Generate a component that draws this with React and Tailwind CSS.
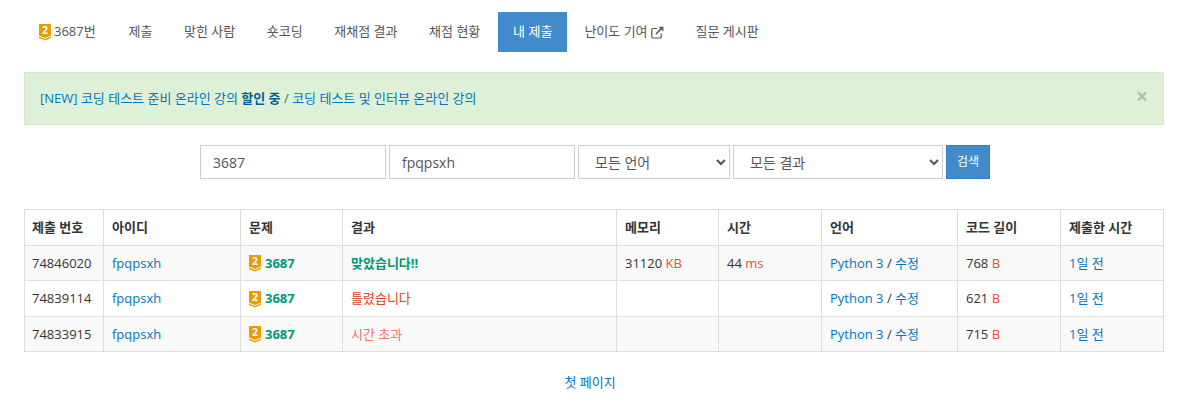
import React from 'react';

const tabs = ['제출', '맞힌 사람', '숏코딩', '재채점 결과', '채점 현황'];

const rows = [
  { id: '74846020', result: '맞았습니다!!', resultClass: 'font-bold text-[#009874]', memory: '31120', time: '44', len: '768', rowClass: 'h-[35px] bg-[#f9f9f9]' },
  { id: '74839114', result: '틀렸습니다', resultClass: 'text-[#dd4124]', memory: '', time: '', len: '621', rowClass: 'h-[36px] bg-white' },
  { id: '74833915', result: '시간 초과', resultClass: 'text-[#fa7268]', memory: '', time: '', len: '715', rowClass: 'h-[35px] bg-[#f9f9f9]' },
];

const headers = ['제출 번호', '아이디', '문제', '결과', '메모리', '시간', '언어', '코드 길이', '제출한 시간'];
const widths = ['w-[79px]', 'w-[137px]', 'w-[102px]', 'w-[274px]', 'w-[102px]', 'w-[103px]', 'w-[136px]', 'w-[103px]', 'w-[103px]'];

function Tier() {
  return (
    <svg width="12" height="17" viewBox="0 0 12 17" className="shrink-0">
      <path d="M0 0H12V11.5L6 14L0 11.5Z" fill="#ec9a00" />
      <path d="M0 12.6L6 15.1L12 12.6V14L6 16.5L0 14Z" fill="#ec9a00" />
      <text x="6" y="10" textAnchor="middle" fontSize="10.5" fontWeight="700" fill="#fff" fontFamily="'Open Sans', sans-serif">2</text>
    </svg>
  );
}

function ExternalLink() {
  return (
    <svg width="13" height="13" viewBox="0 0 13 13" fill="none" stroke="#555" className="ml-[3px]">
      <path d="M6 2.5H2A1.2 1.2 0 0 0 .8 3.7V10.8A1.2 1.2 0 0 0 2 12H9A1.2 1.2 0 0 0 10.2 10.8V7.5" strokeWidth="1.2" />
      <path d="M5 8L11 2" strokeWidth="1.6" />
      <path d="M7.5 .8H12.4V5.7Z" fill="#555" stroke="none" />
    </svg>
  );
}

const cell = 'border border-[#ddd] px-[8px] align-middle text-left';

export default function App() {
  return (
    <div className="w-[1186px] bg-white text-[13px] text-[#333] font-['Open_Sans','Noto_Sans_CJK_KR',sans-serif]">
      <div className="pl-[24px] pr-[22px] pt-[12px]">

        {/* 탭 */}
        <ul className="flex h-[40px] text-[#555]">
          <li className="flex items-center pl-[15px] pr-[17px]">
            <Tier />
            <span className="ml-[3px]">3687번</span>
          </li>
          {tabs.map(tab => (
            <li key={tab} className="flex items-center px-[15.8px]">{tab}</li>
          ))}
          <li className="flex items-center ml-[2px] px-[15px] bg-[#428bca] text-white">내 제출</li>
          <li className="flex items-center px-[17px]">
            난이도 기여
            <ExternalLink />
          </li>
          <li className="flex items-center px-[15px]">질문 게시판</li>
        </ul>

        {/* 알림 */}
        <div className="relative mt-[20px] h-[53px] flex items-center pl-[15px] bg-[#dff0d8] border border-[#d6e9c6] text-[#0076c0]">
          <span>
            [NEW] 코딩 테스트 준비 온라인 강의 <b className="text-[#005d98]">할인 중</b> <span className="text-[#3c763d]">/</span> 코딩 테스트 및 인터뷰 온라인 강의
          </span>
          <span className="absolute right-[15px] top-[13px] text-[21px] leading-[21px] font-bold text-black opacity-20">×</span>
        </div>

        {/* 검색 */}
        <div className="mt-[20px] pl-[2px] flex justify-center gap-[3px] text-[14px] text-[#555]">
          <input readOnly value="3687" className="w-[186px] h-[34px] px-[12px] border border-[#ccc] outline-none" />
          <input readOnly value="fpqpsxh" className="w-[186px] h-[34px] px-[12px] border border-[#ccc] outline-none" />
          <select className="w-[152px] h-[34px] px-[12px] border border-[#ccc] bg-white outline-none">
            <option>모든 언어</option>
          </select>
          <select className="w-[210px] h-[34px] px-[12px] border border-[#ccc] bg-white outline-none">
            <option>모든 결과</option>
          </select>
          <button className="w-[44px] h-[34px] bg-[#428bca] border border-[#357ebd] text-white text-[12px]">검색</button>
        </div>

        {/* 채점 목록 */}
        <table className="mt-[30px] w-[1139px] table-fixed border-collapse">
          <colgroup>
            {widths.map((w, i) => <col key={i} className={w} />)}
          </colgroup>
          <thead>
            <tr className="h-[36px]">
              {headers.map((h, i) => <th key={h} className={`${cell} font-bold ${i === 0 ? 'pl-[7px]' : ''}`}>{h}</th>)}
            </tr>
          </thead>
          <tbody>
            {rows.map(row => (
              <tr key={row.id} className={row.rowClass}>
                <td className={`${cell} pl-[7px] pt-[1px]`}>{row.id}</td>
                <td className={`${cell} pt-[1px] text-[#0076c0]`}>fpqpsxh</td>
                <td className={`${cell} pt-[1px]`}>
                  <div className="flex items-center gap-[4px] font-bold text-[#009874]">
                    <Tier />
                    3687
                  </div>
                </td>
                <td className={`${cell} pt-[1px] ${row.resultClass}`}>{row.result}</td>
                <td className={`${cell} pt-[1px]`}>
                  {row.memory && <>{row.memory} <span className="text-[#e74c3c]">KB</span></>}
                </td>
                <td className={`${cell} pt-[1px]`}>
                  {row.time && <>{row.time} <span className="text-[#e74c3c]">ms</span></>}
                </td>
                <td className={`${cell} pt-[1px]`}>
                  <span className="text-[#0076c0]">Python 3</span> / <span className="text-[#0076c0]">수정</span>
                </td>
                <td className={`${cell} pt-[1px]`}>{row.len} <span className="text-[#e74c3c]">B</span></td>
                <td className={`${cell} pt-[1px] text-[#0076c0]`}>1일 전</td>
              </tr>
            ))}
          </tbody>
        </table>

        {/* 페이지 */}
        <div className="mt-[21px] pr-[8px] pb-[12px] text-center text-[#0076c0]">첫 페이지</div>
      </div>
    </div>
  );
}
